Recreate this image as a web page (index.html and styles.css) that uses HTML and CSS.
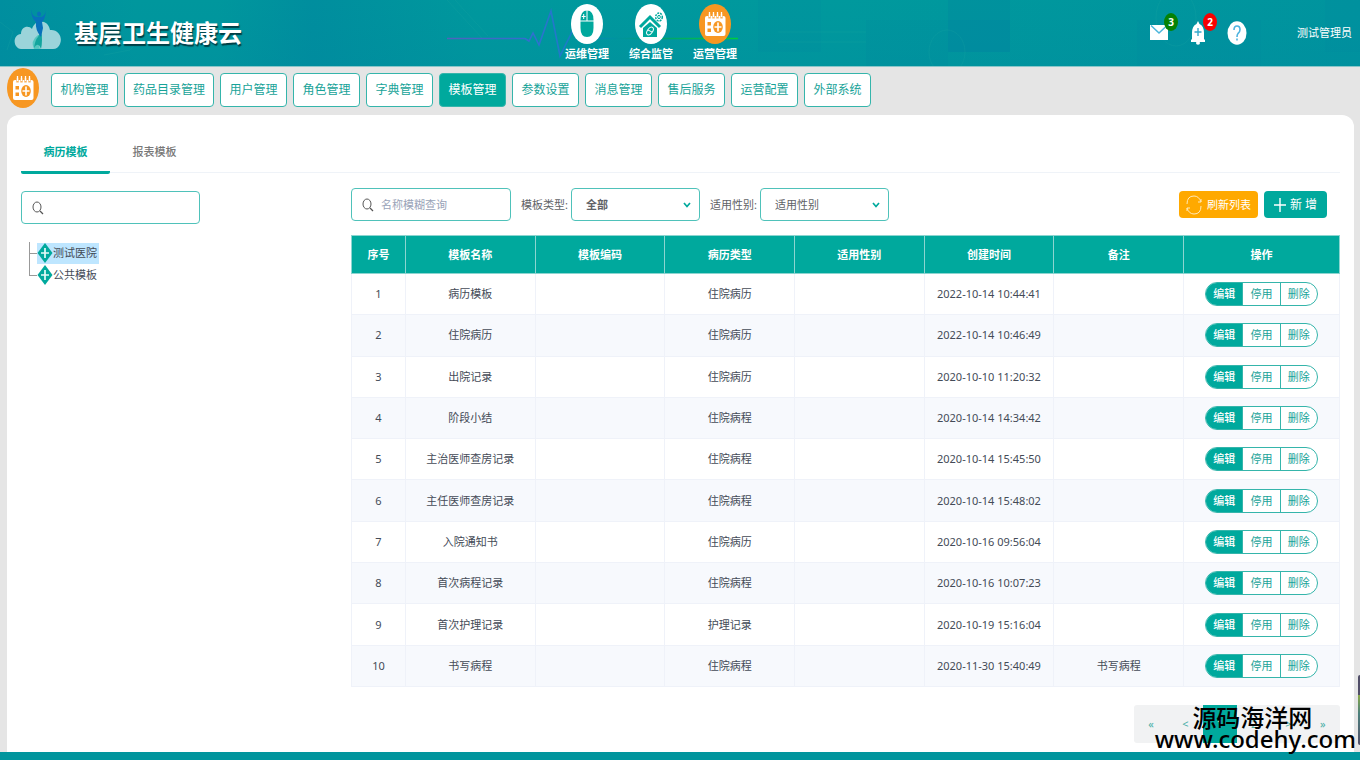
FILE: index.html
```html
<!DOCTYPE html>
<html lang="zh-CN">
<head>
<meta charset="utf-8">
<title>基层卫生健康云</title>
<link rel="stylesheet" href="styles.css">
</head>
<body>
<svg class="defs" aria-hidden="true">
  <symbol id="calendar" viewBox="0 0 32 40" preserveAspectRatio="none">
    <ellipse cx="16" cy="20" rx="16" ry="20" fill="#f79722"/>
    <path d="M8 12H24.500Q26.500 12 26.500 14V30Q26.500 32 24.500 32H8Q6 32 6 30V14Q6 12 8 12Z" fill="#fff"/>
    <path d="M10.500 10V14.500M14.500 10V14.500M18.500 10V14.500M22.500 10V14.500" stroke="#f9b25c" stroke-width="2.400"/>
    <path d="M10.500 8V13M14.500 8V13M18.500 8V13M22.500 8V13" stroke="#fff" stroke-width="1.300"/>
    <path d="M8.500 18H12V21.500H8.500ZM8.500 24.500H12V28H8.500Z" fill="#f79722"/>
    <ellipse cx="19" cy="23" rx="4.800" ry="6" fill="#f79722"/>
    <path d="M19 18.500V27.500M15.500 23H22.500" stroke="#fff" stroke-width="1.600"/>
  </symbol>
  <symbol id="search" viewBox="0 0 12 14"><ellipse cx="5" cy="6" rx="4" ry="5" fill="none" stroke="#555" stroke-width="1"/><path d="M8 10L11 13" stroke="#555" stroke-width="1.200"/></symbol>
  <symbol id="diamond" viewBox="0 0 16 20"><path d="M8 0L15.500 10L8 20L0.500 10Z" fill="#00a99d"/><path d="M8 5V15M4 10H12" stroke="#e3faf8" stroke-width="1.700"/></symbol>
  <symbol id="chevron" viewBox="0 0 8 6"><path d="M1 1L4 4.500L7 1" fill="none" stroke="#00a99d" stroke-width="1.700"/></symbol>
</svg>

<header class="header">
  <svg class="header-art" viewBox="0 0 1360 66" preserveAspectRatio="none" aria-hidden="true">
    <defs>
      <linearGradient id="base"><stop offset="0" stop-color="#008f9f"/><stop offset=".1" stop-color="#00979d"/><stop offset=".16" stop-color="#00979d"/><stop offset=".23" stop-color="#008e9e"/><stop offset=".35" stop-color="#00989d"/><stop offset=".62" stop-color="#00999d"/><stop offset="1" stop-color="#00949e"/></linearGradient>
      <linearGradient id="pulse" gradientUnits="userSpaceOnUse" x1="447" y1="0" x2="738" y2="0"><stop offset="0" stop-color="#4f63bd"/><stop offset=".3" stop-color="#2f70d0"/><stop offset=".42" stop-color="#1a7cc8"/><stop offset=".55" stop-color="#0090a8"/><stop offset=".75" stop-color="#00a46d"/><stop offset="1" stop-color="#00cf3b"/></linearGradient>
      <linearGradient id="shade" x2="0" y2="1"><stop offset="0" stop-color="#0083a0" stop-opacity="0"/><stop offset="1" stop-color="#0083a0" stop-opacity=".2"/></linearGradient>
    </defs>
    <rect width="1360" height="66" fill="url(#base)"/>
    <rect width="1360" height="66" fill="url(#shade)"/>
    <path d="M758 0H821V52H758ZM866 20H948V66H866ZM1137 20H1261V66H1137ZM1325 0H1360V52H1325Z" fill="#0080a0" opacity=".13"/>
    <path d="M948 0H1010V20H948Z" fill="#0080a0" opacity=".22"/>
    <path d="M948 20H1010V52H948Z" fill="#0080a0" opacity=".4"/>
    <g fill="none" stroke="#20aaa5" opacity=".22"><path d="M447 0L482 38M455 0L488 36M0 22L13 32L7 50M104 55L130 50L139 40M778 32H866M778 42H866"/><ellipse cx="947" cy="52" rx="18" ry="22"/><ellipse cx="1176" cy="18" rx="20" ry="28"/></g>
    <path d="M447 38.500H525L529 41L533 33L539 45L551 11L560 56L573 30L578 38.500H738" fill="none" stroke="url(#pulse)" stroke-width="1.600"/>
  </svg>
  <div class="brand">
    <svg class="logo" viewBox="0 0 48 42" aria-hidden="true"><path d="M7 40C-1 39-2 26 7 25C7 17 15 16 18 20C21 10 34 10 36 21C44 20 49 28 46 35Q44 40 39 40Z" fill="#9bd4da"/><path d="M24 26Q16 32 20 40H26Q23 33 28 26Z" fill="#55c6c0"/><path d="M27 22Q29 31 27 40Q24 32 20 39Q21 31 24 28Z" fill="#12a59e"/><path d="M17 0Q18 8 23 8H27Q31 7 32 1Q31 11 28 13L29 19L27 28Q21 21 22 13Q17 9 17 0Z" fill="#0871bb"/><ellipse cx="25" cy="5" rx="2" ry="2.500" fill="#0871bb"/></svg>
    <h1>基层卫生健康云</h1>
  </div>
  <nav class="systems" aria-label="系统">
    <a href="#"><svg viewBox="0 0 32 40" aria-hidden="true"><ellipse cx="16" cy="20" rx="16" ry="20" fill="#fff"/><path d="M9.500 16Q9.500 6.500 16 6.500Q22.500 6.500 22.500 16V24Q22.500 33 16 33Q9.500 33 9.500 24Z" fill="#00a89d"/><path d="M9 17H23M16 6V17" stroke="#fff"/><path d="M12.700 10V15M10.700 12.500H14.700" stroke="#fff"/></svg><span>运维管理</span></a>
    <a href="#"><svg viewBox="0 0 32 40" aria-hidden="true"><ellipse cx="16" cy="20" rx="16" ry="20" fill="#fff"/><path d="M5 23L15 13L25 23" fill="none" stroke="#00a89d" stroke-width="3"/><path d="M8 24L15 18L22 24V33H8Z" fill="#00a89d"/><ellipse cx="15" cy="27" rx="2.500" ry="4.500" fill="none" stroke="#fff" transform="rotate(35 15 27)"/><path d="M13 26L17 28" stroke="#fff"/><ellipse cx="24" cy="13" rx="3.300" ry="4" fill="none" stroke="#00a89d" stroke-width="1.500" stroke-dasharray="2 1"/><ellipse cx="24" cy="13" rx="1.300" ry="1.700" fill="none" stroke="#00a89d"/></svg><span>综合监管</span></a>
    <a href="#"><svg aria-hidden="true"><use href="#calendar"/></svg><span>运营管理</span></a>
  </nav>
  <div class="account">
    <button class="notice" aria-label="消息"><svg viewBox="0 0 20 24" aria-hidden="true"><path d="M1 4H19V19H1Z" fill="#fff"/><path d="M2 4.500L10 12L18 4.500" fill="none" stroke="#4db6dc" stroke-width="1.500"/></svg><b class="badge green">3</b></button>
    <button class="notice" aria-label="提醒"><svg viewBox="0 0 20 24" aria-hidden="true"><path d="M10 0L11.500 3Q16 5 16 12V18L17 19V21H3V19L4 18V12Q4 5 8.500 3Z" fill="#fff"/><ellipse cx="10" cy="22" rx="2" ry="1.800" fill="#fff"/><path d="M10 7V15M6.500 11H13.500" stroke="#36a9cc" stroke-width="1.400"/></svg><b class="badge red">2</b></button>
    <button class="notice" aria-label="帮助"><svg viewBox="0 0 20 24" aria-hidden="true"><ellipse cx="10" cy="12" rx="9.500" ry="11.800" fill="#fff"/><path d="M7 9Q7 5 10 5Q13 5 13 8.500Q13 11 11 12.500Q10 13.500 10 16M10 17.500V19.500" fill="none" stroke="#4db3df" stroke-width="1.600"/></svg></button>
    <span class="user">测试管理员</span>
  </div>
</header>

<nav class="modules" aria-label="模块">
  <svg class="module-icon" aria-hidden="true"><use href="#calendar"/></svg>
  <button>机构管理</button><button>药品目录管理</button><button>用户管理</button><button>角色管理</button><button>字典管理</button><button class="active">模板管理</button><button>参数设置</button><button>消息管理</button><button>售后服务</button><button>运营配置</button><button>外部系统</button>
</nav>

<main class="panel">
  <div class="tabs"><button class="tab active">病历模板</button><button class="tab">报表模板</button></div>
  <div class="content">
    <aside class="side">
      <div class="search"><svg aria-hidden="true"><use href="#search"/></svg><input type="text" aria-label="搜索模板机构"></div>
      <ul class="tree">
        <li><a class="selected" href="#"><svg aria-hidden="true"><use href="#diamond"/></svg>测试医院</a></li>
        <li><a href="#"><svg aria-hidden="true"><use href="#diamond"/></svg>公共模板</a></li>
      </ul>
    </aside>
    <section class="list">
      <div class="filters">
        <div class="search"><svg aria-hidden="true"><use href="#search"/></svg><input type="text" placeholder="名称模糊查询" aria-label="名称模糊查询"></div>
        <div class="field"><label for="kind">模板类型:</label><div class="picker"><select id="kind" class="chosen"><option>全部</option></select><svg aria-hidden="true"><use href="#chevron"/></svg></div></div>
        <div class="field"><label for="sex">适用性别:</label><div class="picker"><select id="sex"><option>适用性别</option></select><svg aria-hidden="true"><use href="#chevron"/></svg></div></div>
        <div class="commands">
          <button class="refresh"><svg viewBox="0 0 16 20" aria-hidden="true"><path d="M1 9Q1 1 8 1Q13 1 15 7M15 11Q15 19 8 19Q3 19 1 13M12 7H15V4M4 13H1V16" fill="none" stroke="#ffe9b8"/></svg>刷新列表</button>
          <button class="add"><svg viewBox="0 0 12 16" aria-hidden="true"><path d="M6 1V15M0 8H12" stroke="#fff" stroke-width="1.400"/></svg>新 增</button>
        </div>
      </div>
      <table class="records">
        <colgroup><col class="c-index"><col class="c-data"><col class="c-data"><col class="c-data"><col class="c-data"><col class="c-data"><col class="c-data"><col class="c-action"></colgroup>
        <thead><tr><th>序号</th><th>模板名称</th><th>模板编码</th><th>病历类型</th><th>适用性别</th><th>创建时间</th><th>备注</th><th>操作</th></tr></thead>
        <tbody>
          <tr><td>1</td><td>病历模板</td><td></td><td>住院病历</td><td></td><td>2022-10-14 10:44:41</td><td></td><td><div class="actions"><button>编辑</button><button>停用</button><button>删除</button></div></td></tr>
          <tr><td>2</td><td>住院病历</td><td></td><td>住院病历</td><td></td><td>2022-10-14 10:46:49</td><td></td><td><div class="actions"><button>编辑</button><button>停用</button><button>删除</button></div></td></tr>
          <tr><td>3</td><td>出院记录</td><td></td><td>住院病历</td><td></td><td>2020-10-10 11:20:32</td><td></td><td><div class="actions"><button>编辑</button><button>停用</button><button>删除</button></div></td></tr>
          <tr><td>4</td><td>阶段小结</td><td></td><td>住院病程</td><td></td><td>2020-10-14 14:34:42</td><td></td><td><div class="actions"><button>编辑</button><button>停用</button><button>删除</button></div></td></tr>
          <tr><td>5</td><td>主治医师查房记录</td><td></td><td>住院病程</td><td></td><td>2020-10-14 15:45:50</td><td></td><td><div class="actions"><button>编辑</button><button>停用</button><button>删除</button></div></td></tr>
          <tr><td>6</td><td>主任医师查房记录</td><td></td><td>住院病程</td><td></td><td>2020-10-14 15:48:02</td><td></td><td><div class="actions"><button>编辑</button><button>停用</button><button>删除</button></div></td></tr>
          <tr><td>7</td><td>入院通知书</td><td></td><td>住院病历</td><td></td><td>2020-10-16 09:56:04</td><td></td><td><div class="actions"><button>编辑</button><button>停用</button><button>删除</button></div></td></tr>
          <tr><td>8</td><td>首次病程记录</td><td></td><td>住院病程</td><td></td><td>2020-10-16 10:07:23</td><td></td><td><div class="actions"><button>编辑</button><button>停用</button><button>删除</button></div></td></tr>
          <tr><td>9</td><td>首次护理记录</td><td></td><td>护理记录</td><td></td><td>2020-10-19 15:16:04</td><td></td><td><div class="actions"><button>编辑</button><button>停用</button><button>删除</button></div></td></tr>
          <tr><td>10</td><td>书写病程</td><td></td><td>住院病程</td><td></td><td>2020-11-30 15:40:49</td><td>书写病程</td><td><div class="actions"><button>编辑</button><button>停用</button><button>删除</button></div></td></tr>
        </tbody>
      </table>
      <nav class="pages" aria-label="分页"><button>«</button><button>&lt;</button><button class="current">1</button><button>2</button><button>&gt;</button><button>»</button></nav>
    </section>
  </div>
</main>
<footer class="footer"></footer>
<div class="scroll-thumb"></div>
<div class="watermark"><span>源码海洋网</span><span>www.codehy.com</span></div>
</body>
</html>
```

FILE: styles.css
```css
* { box-sizing: border-box; }
body {
  margin: 0;
  min-height: 100vh;
  display: flex;
  flex-direction: column;
  background: #e5e5e5;
  color: #444b57;
  font: 11px/20px "Noto Sans", "Noto Sans CJK SC", sans-serif;
}
button, input, select { font: inherit; color: inherit; margin: 0; }
button { cursor: pointer; border: 0; padding: 0; background: none; }
a { color: inherit; text-decoration: none; }
svg { display: block; flex: none; }
.defs { position: absolute; width: 0; height: 0; }

.header {
  position: relative;
  display: grid;
  grid-template-columns: 1fr auto 1fr;
  height: 67px;
  border-bottom: 1px solid #8ac6c9;
  color: #fff;
}
.header-art { position: absolute; inset: 0; width: 100%; height: 100%; }
.brand, .systems, .account { position: relative; }
.brand { display: flex; align-items: center; gap: 12px; padding-left: 14px; }
.logo { width: 48px; height: 42px; margin-bottom: 6px; }
.brand h1 { margin: 0; font-size: 24px; line-height: 32px; font-weight: 700; text-shadow: 1px 2px 1px #003f46; }
.systems { display: flex; gap: 4px; margin-right: 58px; padding-top: 4px; }
.systems a { width: 60px; display: flex; flex-direction: column; align-items: center; font-weight: 700; }
.systems svg { width: 32px; height: 40px; }
.account { display: flex; align-items: center; justify-content: flex-end; gap: 19px; padding-right: 8px; }
.notice { position: relative; }
.notice svg { width: 20px; height: 24px; }
.badge {
  position: absolute;
  left: 15px;
  top: -8px;
  width: 14px;
  height: 18px;
  border-radius: 50%;
  font-size: 10px;
  line-height: 18px;
  color: #fff;
}
.green { background: #058205; }
.red { background: #f80000; }
.user { margin-left: 31px; }

.modules { display: flex; align-items: center; gap: 6px; height: 48px; padding: 0 7px 2px; }
.module-icon { width: 32px; height: 40px; margin: 0 6px 4px 0; }
.modules button {
  min-width: 67px;
  height: 34px;
  padding: 0 8px;
  border: 1px solid #35b5ab;
  border-radius: 4px;
  background: #fff;
  color: #17a398;
  font-size: 12px;
}
.modules .active { background: #00a99d; color: #fff; }

.panel { flex: 1; margin: 0 6px 0 7px; padding: 0 14px 9px; border-radius: 12px 12px 0 0; background: #fff; }
.tabs { display: flex; height: 58px; border-bottom: 1px solid #eff3f8; }
.tab { width: 89px; height: 59px; padding-top: 17px; border-bottom: 3px solid transparent; color: #777; font-weight: 500; }
.tab.active { border-color: #00a99d; border-radius: 2px; color: #00a99d; font-weight: 700; }
.content { display: flex; padding-top: 15px; }
.side { flex: 0 0 330px; padding-top: 3px; }
.search {
  display: flex;
  align-items: center;
  gap: 6px;
  width: 160px;
  height: 33px;
  padding: 0 10px;
  border: 1px solid #4fc2ba;
  border-radius: 4px;
}
.search svg { width: 12px; height: 14px; }
.search input { flex: 1; min-width: 0; border: 0; padding: 0; outline: 0; background: none; }
.search input::placeholder { color: #99a3b8; opacity: 1; }
.side .search { width: 179px; }

.tree { position: relative; list-style: none; margin: 18px 0 0 8px; padding: 0; }
.tree li { display: flex; align-items: center; height: 22px; }
.tree li::before { content: ""; width: 7px; height: 22px; border-left: 1px solid #999; background: linear-gradient(#999, #999) 0 11px / 7px 1px no-repeat; }
.tree li:last-child::before { height: 11px; align-self: flex-start; border-bottom: 1px solid #999; background: none; }
.tree a { display: flex; align-items: center; height: 21px; padding-right: 2px; }
.tree svg { width: 16px; height: 20px; }
.tree .selected { background: #bee6ff; }

.list { flex: 1; min-width: 0; }
.filters { display: flex; align-items: center; gap: 10px; margin-bottom: 14px; }
.filters .search svg { margin-right: 1px; }
.field { display: flex; align-items: center; gap: 3px; color: #606266; }
.picker { position: relative; }
.picker select { appearance: none; width: 129px; height: 33px; padding: 0 30px 0 14px; border: 1px solid #4fc2ba; border-radius: 4px; background: #fff; }
.picker svg { position: absolute; right: 9px; top: 14px; width: 8px; height: 6px; pointer-events: none; }
.picker .chosen { font-weight: 700; }
.commands { display: flex; gap: 6px; margin-left: auto; padding-right: 13px; }
.commands button { display: flex; align-items: center; justify-content: center; height: 27px; border-radius: 4px; color: #fff; }
.refresh { gap: 5px; width: 79px; background: #ffa900; }
.refresh svg { width: 16px; height: 20px; }
.commands .add { gap: 4px; width: 63px; background: #00a99d; font-size: 12px; }
.add svg { width: 12px; height: 16px; }

.records { width: 100%; height: 452px; table-layout: fixed; border-collapse: collapse; text-align: center; }
.c-index { width: 54px; }
.c-action { width: 156px; }
.records th { height: 38px; padding: 0; border: 1px solid #8cd5d0; background: #00a99d; color: #fff; font-weight: 700; }
.records td { padding: 0; border: 1px solid #eff2f9; }
.records tbody tr:nth-child(even) { background: #f7f9fd; }
.actions { display: flex; width: 113px; height: 24px; margin: 0 auto; overflow: hidden; border: 1px solid #35b5ab; border-radius: 12px; background: #fff; }
.actions button { flex: 1; color: #17a398; line-height: 22px; }
.actions button + button { border-left: 1px solid #35b5ab; }
.actions button:first-child { background: #00a99d; color: #fff; font-weight: 500; }

.pages { display: flex; width: 206px; height: 38px; margin: 18px 0 0 auto; border-radius: 3px; background: #f1f2f3; }
.pages button { flex: 1; color: #4aafa8; }
.pages .current { background: #00a99d; color: #fff; }
.footer { height: 8px; background: #00959d; }
.scroll-thumb { position: absolute; right: 0; top: 675px; width: 2px; height: 70px; border-radius: 2px 0 0 2px; background: linear-gradient(#514e68 28%, #88a849 29%, #4c807d 55%, #524f69); }
.watermark { position: absolute; right: 4px; bottom: 11px; display: flex; flex-direction: column; align-items: center; color: #000; font-size: 24px; font-weight: 500; line-height: 21px; pointer-events: none; }
.watermark span:first-child { padding-right: 6px; }
```
